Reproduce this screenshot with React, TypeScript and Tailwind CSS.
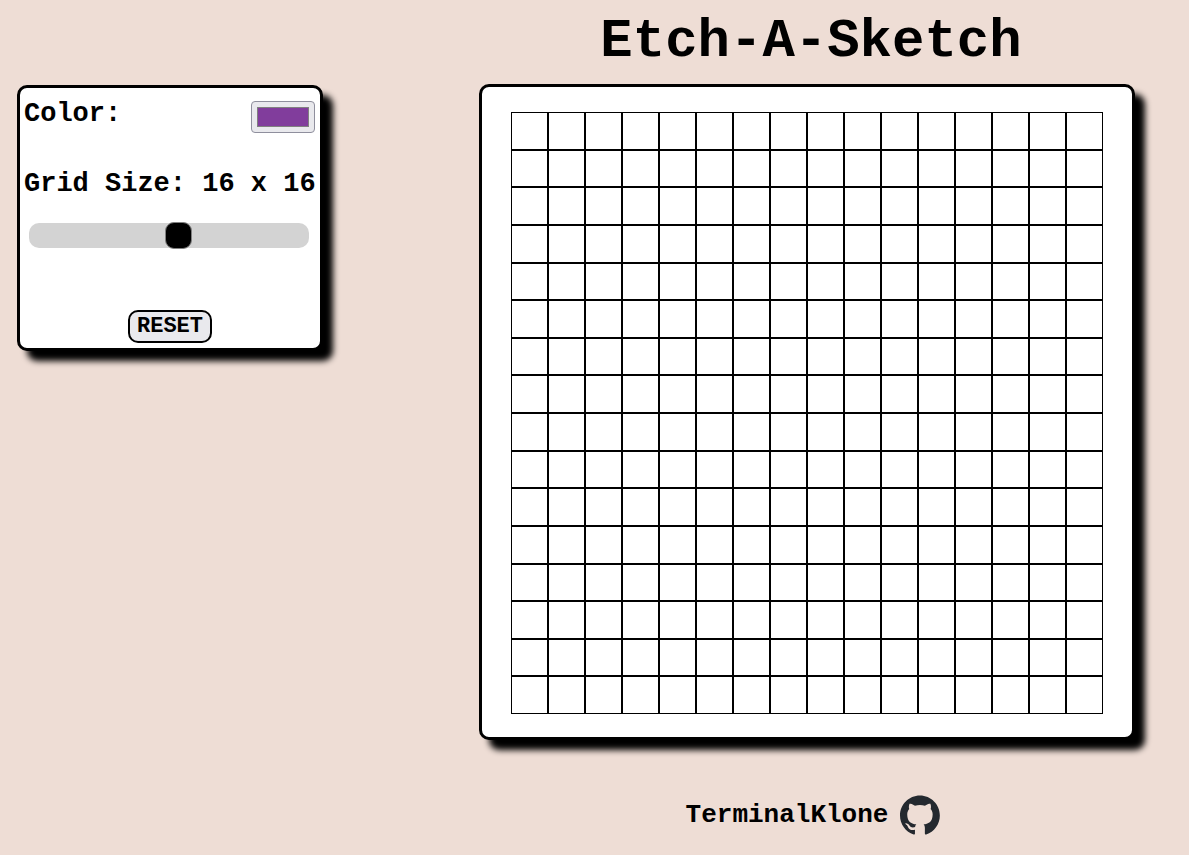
import { useState } from "react";

const DEFAULT_SIZE = 16;

function GithubMark() {
  return (
    <svg viewBox="0 0 98 96" className="h-10 w-10" fill="#24292f" aria-hidden="true">
      <path
        fillRule="evenodd"
        clipRule="evenodd"
        d="M48.854 0C21.839 0 0 22 0 49.217c0 21.756 13.993 40.172 33.405 46.69 2.427.49 3.316-1.059 3.316-2.362 0-1.141-.08-5.052-.08-9.127-13.59 2.934-16.42-5.867-16.42-5.867-2.184-5.704-5.42-7.17-5.42-7.17-4.448-3.015.324-3.015.324-3.015 4.934.326 7.523 5.052 7.523 5.052 4.367 7.496 11.404 5.378 14.235 4.074.404-3.178 1.699-5.378 3.074-6.6-10.839-1.141-22.243-5.378-22.243-24.283 0-5.378 1.94-9.778 5.014-13.2-.485-1.222-2.184-6.275.486-13.038 0 0 4.125-1.304 13.426 5.052a46.97 46.97 0 0 1 12.214-1.63c4.125 0 8.33.571 12.213 1.63 9.302-6.356 13.427-5.052 13.427-5.052 2.67 6.763.97 11.816.485 13.038 3.155 3.422 5.015 7.822 5.015 13.2 0 18.905-11.404 23.06-22.324 24.283 1.78 1.548 3.316 4.481 3.316 9.126 0 6.6-.08 11.897-.08 13.526 0 1.304.89 2.853 3.316 2.364 19.412-6.52 33.405-24.935 33.405-46.691C97.707 22 75.788 0 48.854 0z"
      />
    </svg>
  );
}

type ControlsProps = {
  color: string;
  size: number;
  onColor: (color: string) => void;
  onSize: (size: number) => void;
  onReset: () => void;
};

function Controls({ color, size, onColor, onSize, onReset }: ControlsProps) {
  return (
    <section className="flex w-[306px] flex-col rounded-[10px] border-3 border-black bg-white px-1 pt-3 pb-[5px] shadow-[10px_10px_6px_#000]">
      <div className="flex items-start justify-between pr-px">
        <label htmlFor="color" className="text-[27px] leading-7">
          Color:
        </label>
        <input
          id="color"
          type="color"
          value={color}
          onChange={(e) => onColor(e.target.value)}
          className="mt-px h-8 w-16 cursor-pointer appearance-none rounded border border-[#8f8f9d] bg-[#e9e9ed] p-[5px] [&::-webkit-color-swatch]:rounded-none [&::-webkit-color-swatch]:border [&::-webkit-color-swatch]:border-[#808080] [&::-webkit-color-swatch-wrapper]:p-0"
        />
      </div>
      <label htmlFor="size" className="mt-[37px] text-[27px] leading-7 whitespace-nowrap">
        Grid Size: {size} x {size}
      </label>
      <input
        id="size"
        type="range"
        min={2}
        max={28}
        value={size}
        onChange={(e) => onSize(Number(e.target.value))}
        className="mx-[5px] mt-[25px] h-[25px] w-[280px] cursor-pointer appearance-none rounded-[10px] bg-[#d3d3d3] [&::-webkit-slider-thumb]:h-[27px] [&::-webkit-slider-thumb]:w-[27px] [&::-webkit-slider-thumb]:appearance-none [&::-webkit-slider-thumb]:rounded-[9px] [&::-webkit-slider-thumb]:border [&::-webkit-slider-thumb]:border-[#808080] [&::-webkit-slider-thumb]:bg-black"
      />
      <button
        type="button"
        onClick={onReset}
        className="mt-[62px] h-[33px] w-[84px] cursor-pointer self-center rounded-[10px] border-2 border-black bg-[#e9e9ed] text-[22px] leading-6 font-bold"
      >
        RESET
      </button>
    </section>
  );
}

export default function App() {
  const [color, setColor] = useState("#813d9c");
  const [size, setSize] = useState(DEFAULT_SIZE);
  const [painted, setPainted] = useState<Record<number, string>>({});

  const changeSize = (next: number) => {
    setSize(next);
    setPainted({});
  };

  return (
    <div className="flex min-h-screen bg-[#eeddd5] font-['Liberation_Mono',monospace] font-bold text-black">
      <aside className="w-[425px] shrink-0 pt-[85px] pl-[17px]">
        <Controls
          color={color}
          size={size}
          onColor={setColor}
          onSize={changeSize}
          onReset={() => setPainted({})}
        />
      </aside>
      <div className="flex flex-1 flex-col items-center">
        <h1 className="pt-3 pl-2 text-[54px] leading-[60px]">Etch-A-Sketch</h1>
        <main className="mt-3 aspect-square w-full max-w-[656px] rounded-[10px] border-3 border-black bg-white px-[29px] pt-[25px] pb-[23px] shadow-[10px_10px_6px_#000]">
          <div
            className="grid h-full w-full"
            style={{
              gridTemplateColumns: `repeat(${size}, 1fr)`,
              gridTemplateRows: `repeat(${size}, 1fr)`,
            }}
          >
            {Array.from({ length: size * size }, (_, i) => (
              <div
                key={i}
                className="border border-black"
                style={{ backgroundColor: painted[i] }}
                onMouseEnter={() => setPainted((cells) => ({ ...cells, [i]: color }))}
              />
            ))}
          </div>
        </main>
        <footer className="mt-[55px] pb-5 pl-3">
          <a
            href="https://github.com/TerminalKlone"
            className="flex items-center gap-3 text-[26px] leading-7"
          >
            TerminalKlone
            <GithubMark />
          </a>
        </footer>
      </div>
    </div>
  );
}
